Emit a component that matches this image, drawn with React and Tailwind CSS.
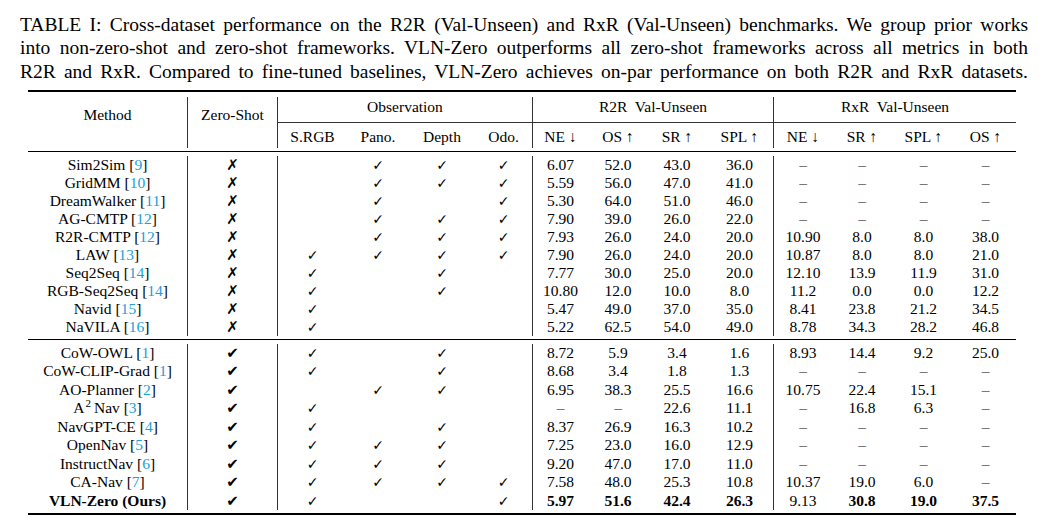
import React from "react";

const COLS =
  "grid grid-cols-[159px_90px_70px_62px_66px_57px_56px_60px_58px_67px_59px_60px_63px_61px]";

const CITE = "text-[#1aa0dc]";

const D = "–";

const group1 = [
  { name: "Sim2Sim", cite: "9", obs: [0, 1, 1, 1], r2r: ["6.07", "52.0", "43.0", "36.0"], rxr: [D, D, D, D] },
  { name: "GridMM", cite: "10", obs: [0, 1, 1, 1], r2r: ["5.59", "56.0", "47.0", "41.0"], rxr: [D, D, D, D] },
  { name: "DreamWalker", cite: "11", obs: [0, 1, 0, 1], r2r: ["5.30", "64.0", "51.0", "46.0"], rxr: [D, D, D, D] },
  { name: "AG-CMTP", cite: "12", obs: [0, 1, 1, 1], r2r: ["7.90", "39.0", "26.0", "22.0"], rxr: [D, D, D, D] },
  { name: "R2R-CMTP", cite: "12", obs: [0, 1, 1, 1], r2r: ["7.93", "26.0", "24.0", "20.0"], rxr: ["10.90", "8.0", "8.0", "38.0"] },
  { name: "LAW", cite: "13", obs: [1, 1, 1, 1], r2r: ["7.90", "26.0", "24.0", "20.0"], rxr: ["10.87", "8.0", "8.0", "21.0"] },
  { name: "Seq2Seq", cite: "14", obs: [1, 0, 1, 0], r2r: ["7.77", "30.0", "25.0", "20.0"], rxr: ["12.10", "13.9", "11.9", "31.0"] },
  { name: "RGB-Seq2Seq", cite: "14", obs: [1, 0, 1, 0], r2r: ["10.80", "12.0", "10.0", "8.0"], rxr: ["11.2", "0.0", "0.0", "12.2"] },
  { name: "Navid", cite: "15", obs: [1, 0, 0, 0], r2r: ["5.47", "49.0", "37.0", "35.0"], rxr: ["8.41", "23.8", "21.2", "34.5"] },
  { name: "NaVILA", cite: "16", obs: [1, 0, 0, 0], r2r: ["5.22", "62.5", "54.0", "49.0"], rxr: ["8.78", "34.3", "28.2", "46.8"] },
];

const group2 = [
  { name: "CoW-OWL", cite: "1", obs: [1, 0, 1, 0], r2r: ["8.72", "5.9", "3.4", "1.6"], rxr: ["8.93", "14.4", "9.2", "25.0"] },
  { name: "CoW-CLIP-Grad", cite: "1", obs: [1, 0, 1, 0], r2r: ["8.68", "3.4", "1.8", "1.3"], rxr: [D, D, D, D] },
  { name: "AO-Planner", cite: "2", obs: [0, 1, 1, 0], r2r: ["6.95", "38.3", "25.5", "16.6"], rxr: ["10.75", "22.4", "15.1", D] },
  { name: "A2Nav", sup: true, cite: "3", obs: [1, 0, 0, 0], r2r: [D, D, "22.6", "11.1"], rxr: [D, "16.8", "6.3", D] },
  { name: "NavGPT-CE", cite: "4", obs: [1, 0, 1, 0], r2r: ["8.37", "26.9", "16.3", "10.2"], rxr: [D, D, D, D] },
  { name: "OpenNav", cite: "5", obs: [1, 1, 1, 0], r2r: ["7.25", "23.0", "16.0", "12.9"], rxr: [D, D, D, D] },
  { name: "InstructNav", cite: "6", obs: [1, 1, 1, 0], r2r: ["9.20", "47.0", "17.0", "11.0"], rxr: [D, D, D, D] },
  { name: "CA-Nav", cite: "7", obs: [1, 1, 1, 1], r2r: ["7.58", "48.0", "25.3", "10.8"], rxr: ["10.37", "19.0", "6.0", D] },
  { name: "VLN-Zero (Ours)", ours: true, obs: [1, 0, 0, 1], r2r: ["5.97", "51.6", "42.4", "26.3"], rxr: ["9.13", "30.8", "19.0", "37.5"], boldMask: [1, 1, 1, 1, 0, 1, 1, 1] },
];

function Check() {
  return <span className="font-['DejaVu_Sans',sans-serif] text-[14px]">✓</span>;
}

function ZeroMark({ zero }) {
  return zero ? (
    <span className="font-['DejaVu_Sans',sans-serif] text-[15px]">✔</span>
  ) : (
    <span className="font-['DejaVu_Sans',sans-serif] text-[15px] font-bold">✗</span>
  );
}

function MethodName({ row }) {
  if (row.ours) return <span className="font-bold">{row.name}</span>;
  return (
    <span>
      {row.sup ? (
        <>
          A<span className="relative -top-[6px] text-[11px] ml-[1px] mr-[3px]">2</span>Nav
        </>
      ) : (
        row.name
      )}{" "}
      [<span className={CITE}>{row.cite}</span>]
    </span>
  );
}

function Row({ row, zero, h }) {
  const cell = h + " text-center whitespace-nowrap";
  const nums = [...row.r2r, ...row.rxr];
  return (
    <div className={COLS}>
      <div className={cell}>
        <MethodName row={row} />
      </div>
      <div className={cell + " border-l border-[#333]"}>
        <ZeroMark zero={zero} />
      </div>
      {row.obs.map((o, i) => (
        <div key={"o" + i} className={cell + (i === 0 ? " border-l border-[#333]" : "")}>
          {o ? <Check /> : null}
        </div>
      ))}
      {nums.map((n, i) => (
        <div
          key={"n" + i}
          className={
            cell +
            (i === 0 || i === 4 ? " border-l border-[#333]" : "") +
            (row.boldMask && row.boldMask[i] ? " font-bold" : "")
          }
        >
          {n}
        </div>
      ))}
    </div>
  );
}

export default function App() {
  return (
    <div className="w-[1042px] h-[526px] bg-white text-black overflow-hidden font-['Liberation_Serif',serif]">
      <div className="ml-[20px] w-[1008px] pt-[13px] text-[19.5px] leading-[23.3px]">
        <div className="text-justify [text-align-last:justify] whitespace-nowrap">
          TABLE I: Cross-dataset performance on the R2R (Val-Unseen) and RxR (Val-Unseen) benchmarks. We group prior works
        </div>
        <div className="text-justify [text-align-last:justify] whitespace-nowrap">
          into non-zero-shot and zero-shot frameworks. VLN-Zero outperforms all zero-shot frameworks across all metrics in both
        </div>
        <div className="text-justify [text-align-last:justify] whitespace-nowrap">
          R2R and RxR. Compared to fine-tuned baselines, VLN-Zero achieves on-par performance on both R2R and RxR datasets.
        </div>
      </div>

      <div className="ml-[28px] w-[988px] mt-[7px] text-[15.5px]">
        <div className="h-[2px] bg-black" />
        <div className="h-[5px]" />
        <div className={COLS + " grid-rows-[26px_25px] leading-[18px]"}>
          <div className="row-span-2 text-center pt-[9px]">Method</div>
          <div className="row-span-2 text-center pt-[9px] border-l border-[#333]">Zero-Shot</div>
          <div className="col-span-4 text-center pt-[1px] border-l border-b border-[#333]">Observation</div>
          <div className="col-span-4 text-center pt-[1px] border-l border-b border-[#333]">
            R2R&nbsp; Val-Unseen
          </div>
          <div className="col-span-4 text-center pt-[1px] border-l border-b border-[#333]">
            RxR&nbsp; Val-Unseen
          </div>
          <div className="text-center pt-[5px] border-l border-[#333]">S.RGB</div>
          <div className="text-center pt-[5px]">Pano.</div>
          <div className="text-center pt-[5px]">Depth</div>
          <div className="text-center pt-[5px]">Odo.</div>
          <div className="text-center pt-[5px] border-l border-[#333]">NE ↓</div>
          <div className="text-center pt-[5px]">OS ↑</div>
          <div className="text-center pt-[5px]">SR ↑</div>
          <div className="text-center pt-[5px]">SPL ↑</div>
          <div className="text-center pt-[5px] border-l border-[#333]">NE ↓</div>
          <div className="text-center pt-[5px]">SR ↑</div>
          <div className="text-center pt-[5px]">SPL ↑</div>
          <div className="text-center pt-[5px]">OS ↑</div>
        </div>
        <div className="h-[3px]" />
        <div className="h-px bg-black" />
        <div className="h-[4px]" />
        {group1.map((r) => (
          <Row key={r.name + r.cite} row={r} zero={false} h="h-[18px] leading-[18px]" />
        ))}
        <div className="h-[3px]" />
        <div className="h-px bg-black" />
        <div className="h-[4px]" />
        {group2.map((r) => (
          <Row key={r.name + (r.cite || "")} row={r} zero={true} h="h-[18.5px] leading-[18.5px]" />
        ))}
        <div className="h-[3px]" />
        <div className="h-[2px] bg-black" />
      </div>
    </div>
  );
}
